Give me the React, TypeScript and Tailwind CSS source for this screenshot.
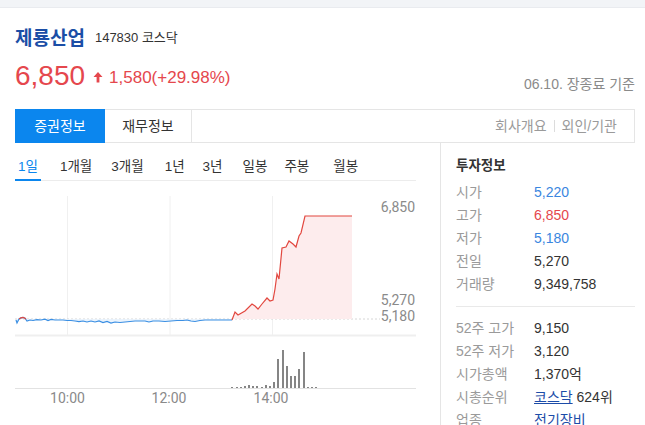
import React from "react";

const FONT = "font-['Liberation_Sans','Noto_Sans_CJK_KR',sans-serif]";

const periods = [
  { label: "1일", cls: "px-[3px] text-[#0b86ee]" },
  { label: "1개월", cls: "ml-[19px]" },
  { label: "3개월", cls: "ml-[19px]" },
  { label: "1년", cls: "ml-[21px]" },
  { label: "3년", cls: "ml-[18px]" },
  { label: "일봉", cls: "ml-[20px]" },
  { label: "주봉", cls: "ml-[17px]" },
  { label: "월봉", cls: "ml-[24px]" },
];

const bluePoints: [number, number][] = [
  [1, 139], [2, 142], [4, 138], [6, 136.8], [8, 136.4], [10, 137.2], [12, 140], [15, 139],
  [18, 139.5], [22, 138.6], [26, 139], [30, 138.2], [33, 139.5], [36, 138.4], [40, 139],
  [44, 139], [48, 139], [52, 139.5], [56, 139.5], [60, 140], [64, 140.6], [68, 140],
  [72, 141], [76, 140], [80, 141], [84, 140], [88, 141.5], [92, 140.5], [96, 142],
  [100, 141], [105, 141.5], [110, 141], [115, 140.5], [120, 140], [125, 140], [130, 140],
  [134, 141], [138, 140], [144, 140], [150, 140.5], [156, 140], [162, 139.5], [168, 139.5],
  [172, 139], [176, 140], [180, 140.5], [185, 139.5], [190, 139], [196, 139], [202, 139],
  [208, 139], [213, 139], [217, 139],
];

const redPoints: [number, number][] = [
  [217, 139], [220, 131], [223, 134], [230, 130], [237, 123], [240, 125], [243, 128],
  [247, 123], [252, 117], [255, 120], [258, 119], [260, 108], [262, 93], [264, 98],
  [267, 67], [271, 66], [274, 60], [278, 63], [281, 66], [284, 55], [286, 52], [290, 35],
  [337, 35],
];

const volumes: [number, number][] = [
  [217, 1], [222, 1], [226, 1], [230, 2], [234, 3], [238, 2], [242, 2], [247, 1], [251, 3],
  [255, 2], [259, 6], [263, 29], [268, 38], [272, 22], [276, 12], [280, 12], [284, 19],
  [289, 36], [293, 1], [297, 1], [301, 1],
];

const toStr = (pts: [number, number][]) => pts.map(([x, y]) => `${x},${y}`).join(" ");

const infoTop = [
  { label: "시가", value: "5,220", tone: "text-[#3a86e0]" },
  { label: "고가", value: "6,850", tone: "text-[#e5474d]" },
  { label: "저가", value: "5,180", tone: "text-[#3a86e0]" },
  { label: "전일", value: "5,270", tone: "text-[#333]" },
  { label: "거래량", value: "9,349,758", tone: "text-[#333]" },
];

function PriceChart() {
  return (
    <svg width="402" height="243" viewBox="0 0 402 243" className="block">
      {[52.5, 155, 257.5].map((x) => (
        <line key={x} x1={x} y1="15" x2={x} y2="154" stroke="#f0f0f0" strokeWidth="1" />
      ))}
      <line x1="0" y1="154.5" x2="401" y2="154.5" stroke="#efefef" strokeWidth="2" />
      <line x1="0" y1="138" x2="365" y2="138" stroke="#d6d6d6" strokeWidth="1" strokeDasharray="2 2" />

      <polygon
        points={`${toStr(bluePoints)} 217,138 1,138`}
        fill="#e6f1fc"
        opacity="0.8"
      />
      <polygon points={`${toStr(redPoints)} 337,138 217,138`} fill="#fdeced" />
      <polyline points={toStr(bluePoints)} fill="none" stroke="#3b8fe3" strokeWidth="1.2" />
      <polyline
        points="4,138 6,136.8 8,136.4 10,137.2 11,138"
        fill="none"
        stroke="#e2473f"
        strokeWidth="1.2"
      />
      <polyline points={toStr(redPoints)} fill="none" stroke="#e2473f" strokeWidth="1.2" />

      <g fontFamily="Roboto, 'Liberation Sans', sans-serif" fontSize="14" fill="#8a8a8a" textAnchor="end">
        <text x="400" y="31">6,850</text>
        <text x="400" y="124">5,270</text>
        <text x="400" y="140">5,180</text>
      </g>

      {volumes.map(([x, h]) => (
        <rect key={x} x={x - 1} y={207 - h} width="2" height={h} fill="#858585" />
      ))}
      <line x1="0" y1="207.5" x2="401" y2="207.5" stroke="#e2e2e2" strokeWidth="1" />

      <g fontFamily="Roboto, 'Liberation Sans', sans-serif" fontSize="14" fill="#8a8a8a" textAnchor="middle">
        <text x="52.5" y="222">10:00</text>
        <text x="154" y="222">12:00</text>
        <text x="256" y="222">14:00</text>
      </g>
    </svg>
  );
}

export default function App() {
  return (
    <div className={`h-[425px] w-[645px] overflow-hidden bg-white ${FONT}`}>
      <div className="h-[8px] border-b border-[#e9ebef] bg-[#f2f4f7]" />

      <div className="pl-[15px] pr-[10px]">
        <div className="mt-[17px] flex h-[26px] items-center">
          <span className="text-[19px] font-bold leading-none text-[#1b4ea6]">제룡산업</span>
          <span className="ml-[10px] text-[13px] text-[#333]">147830 코스닥</span>
        </div>

        <div className="mt-[9px] flex h-[32px] items-center">
          <span className="text-[28px] leading-none text-[#e5474d]">6,850</span>
          <svg width="10" height="12" viewBox="0 0 10 12" className="ml-[8px] mt-[2px]">
            <path d="M5 1 L9.5 6 L6.4 6 L6.4 11.5 L3.6 11.5 L3.6 6 L0.5 6 Z" fill="#e5474d" />
          </svg>
          <span className="ml-[6px] mt-[2px] text-[17px] leading-none text-[#e5474d]">
            1,580(+29.98%)
          </span>
          <span className="ml-auto mt-[16px] text-[14px] text-[#8a8a8a]">06.10. 장종료 기준</span>
        </div>

        <div className="mt-[17px] flex h-[34px] w-[620px] border border-[#e5e5e5]">
          <div className="-my-px -ml-px flex w-[90px] items-center justify-center bg-[#0b86ee] text-[14px] text-white">
            증권정보
          </div>
          <div className="flex w-[87px] items-center justify-center border-r border-[#e5e5e5] text-[14px] text-[#333]">
            재무정보
          </div>
          <div className="ml-auto flex items-center pr-[17px] text-[14px] text-[#9a9a9a]">
            <span>회사개요</span>
            <span className="mx-[7px] h-[12px] w-px bg-[#dcdcdc]" />
            <span>외인/기관</span>
          </div>
        </div>

        <div className="flex">
          <div className="w-[425px]">
            <div className="mt-[12px] flex h-[26px] w-[401px] border-b border-[#ececec] text-[13.5px] text-[#333]">
              {periods.map((p, i) => (
                <div key={p.label} className={`relative flex h-full items-center ${p.cls}`}>
                  {p.label}
                  {i === 0 ? (
                    <span className="absolute -bottom-px left-0 h-[2px] w-full bg-[#0b86ee]" />
                  ) : null}
                </div>
              ))}
            </div>
            <PriceChart />
          </div>

          <div className="w-[195px] border-l border-[#e5e5e5] pl-[15px]">
            <p className="mt-[13px] flex h-[20px] items-center text-[13.5px] font-bold text-[#333]">
              투자정보
            </p>
            <div className="mt-[5px] grid">
              {infoTop.map((row) => (
                <div key={row.label} className="grid h-[23px] grid-cols-[78px_1fr] items-center text-[14px]">
                  <span className="text-[#9a9a9a]">{row.label}</span>
                  <span className={row.tone}>{row.value}</span>
                </div>
              ))}
            </div>
            <div className="mt-[10px] border-t border-[#e9e9e9] pt-[10px] text-[14px]">
              <div className="grid h-[23px] grid-cols-[78px_1fr] items-center">
                <span className="text-[#9a9a9a]">52주 고가</span>
                <span className="text-[#333]">9,150</span>
              </div>
              <div className="grid h-[23px] grid-cols-[78px_1fr] items-center">
                <span className="text-[#9a9a9a]">52주 저가</span>
                <span className="text-[#333]">3,120</span>
              </div>
              <div className="grid h-[23px] grid-cols-[78px_1fr] items-center">
                <span className="text-[#9a9a9a]">시가총액</span>
                <span className="text-[#333]">1,370억</span>
              </div>
              <div className="grid h-[23px] grid-cols-[78px_1fr] items-center">
                <span className="text-[#9a9a9a]">시총순위</span>
                <span className="text-[#333]">
                  <span className="text-[#1c4ca8] underline">코스닥</span> 624위
                </span>
              </div>
              <div className="grid h-[23px] grid-cols-[78px_1fr] items-center">
                <span className="text-[#9a9a9a]">업종</span>
                <span className="text-[#1c4ca8] underline">전기장비</span>
              </div>
            </div>
          </div>
        </div>
      </div>
    </div>
  );
}
